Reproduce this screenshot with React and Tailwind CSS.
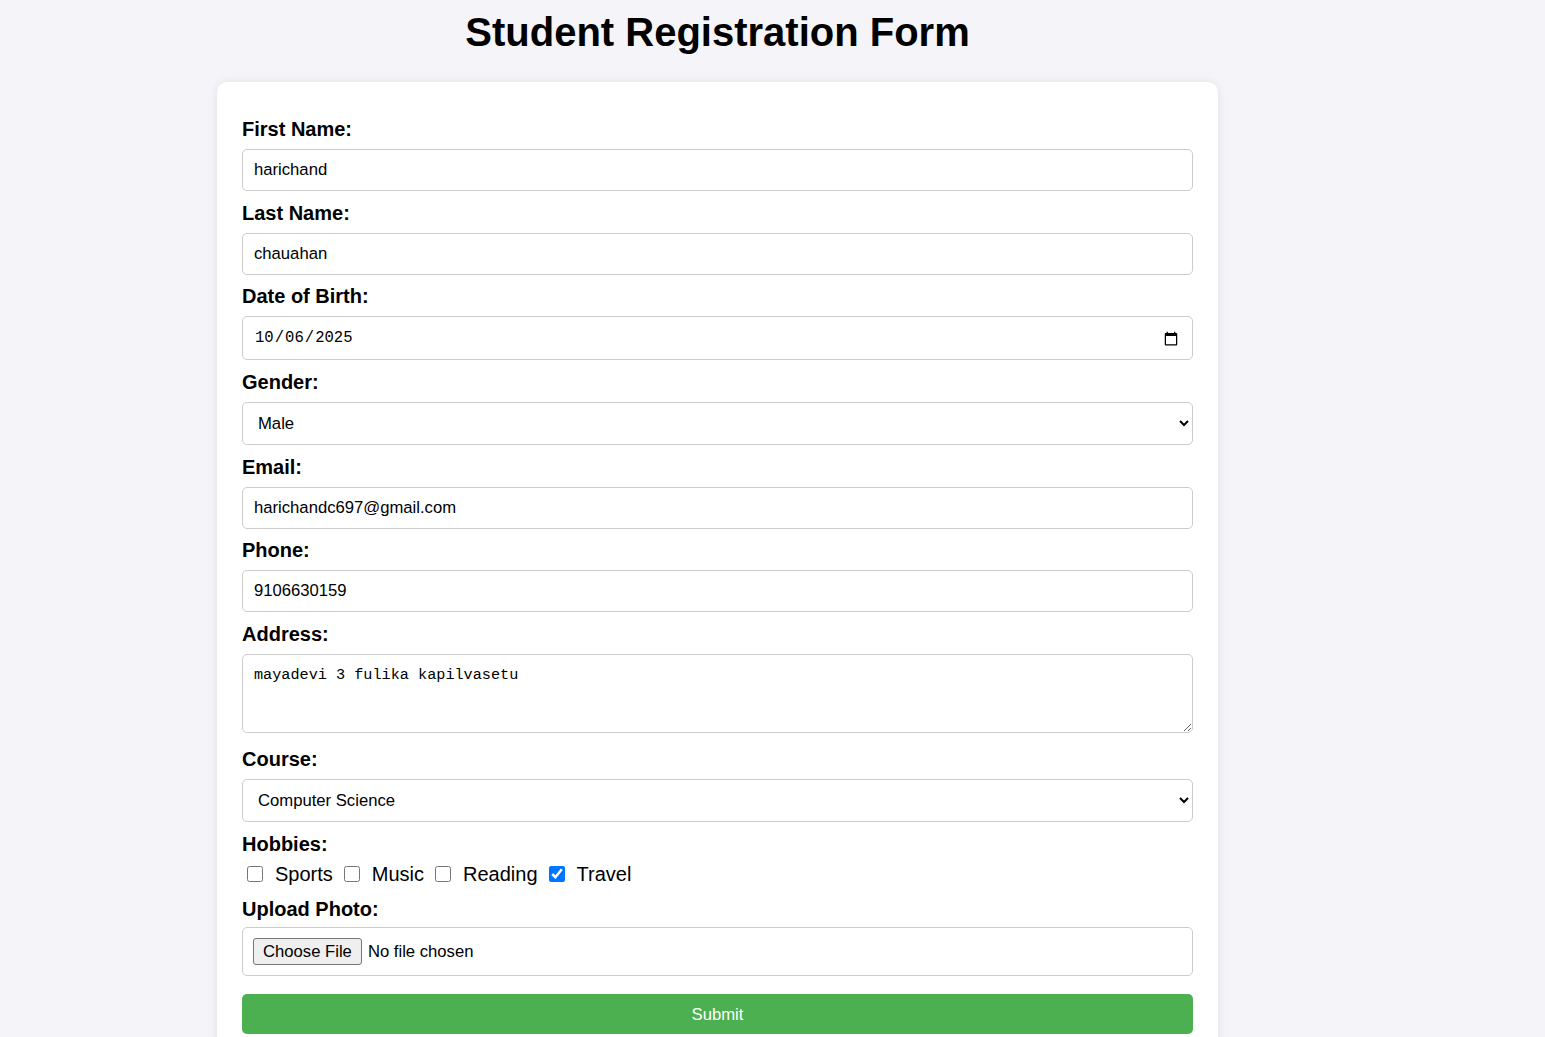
import React from 'react';

const labelCls = 'block text-[20px] leading-[23px] font-bold mb-[8px]';
const inputCls =
  'block w-full h-[42px] border border-[#cccccc] rounded-[5px] px-[11px] text-[16.67px] bg-white text-black mb-[10.7px] outline-none';

const hobbies = [
  { name: 'Sports', checked: false },
  { name: 'Music', checked: false },
  { name: 'Reading', checked: false },
  { name: 'Travel', checked: true },
];

export default function App() {
  return (
    <div className="min-h-[1037px] bg-[#f4f4f9] font-['Liberation_Sans',Arial,sans-serif] text-black">
      <div className="w-[1435px]">
        <h1 className="text-center text-[40px] leading-[46px] font-bold pt-[9px] mb-[27px]">
          Student Registration Form
        </h1>

        <div className="mx-auto w-[1001px] bg-white rounded-[10px] shadow-[0_0_10px_rgba(0,0,0,0.08)] px-[25px] pt-[36px] pb-[30px]">
          <form onSubmit={(e) => e.preventDefault()}>
            <label className={labelCls}>First Name:</label>
            <input className={inputCls} type="text" defaultValue="harichand" />

            <label className={labelCls}>Last Name:</label>
            <input className={inputCls} type="text" defaultValue="chauahan" />

            <label className={labelCls}>Date of Birth:</label>
            <input
              className="block w-full h-[44px] border border-[#cccccc] rounded-[5px] px-[11px] text-[15.6px] font-['Liberation_Mono',monospace] bg-white mb-[10.7px] outline-none"
              type="date"
              defaultValue="2025-10-06"
            />

            <label className={labelCls}>Gender:</label>
            <select
              className="block w-full h-[43px] border border-[#cccccc] rounded-[5px] px-[11px] text-[16.67px] bg-white mb-[10.7px] outline-none"
              defaultValue="Male"
            >
              <option>Male</option>
              <option>Female</option>
              <option>Other</option>
            </select>

            <label className={labelCls}>Email:</label>
            <input className={inputCls} type="email" defaultValue="harichandc697@gmail.com" />

            <label className={labelCls}>Phone:</label>
            <input className={inputCls} type="tel" defaultValue="9106630159" />

            <label className={labelCls}>Address:</label>
            <textarea
              className="block w-full h-[79px] border border-[#cccccc] rounded-[5px] px-[11px] pt-[11px] pb-[10px] text-[15.2px] leading-[19px] font-['Liberation_Mono',monospace] bg-white mb-[15px] outline-none"
              defaultValue="mayadevi 3 fulika kapilvasetu"
            />

            <label className={labelCls}>Course:</label>
            <select
              className="block w-full h-[43px] border border-[#cccccc] rounded-[5px] px-[11px] text-[16.67px] bg-white mb-[11px] outline-none"
              defaultValue="Computer Science"
            >
              <option>Computer Science</option>
              <option>Information Technology</option>
              <option>Business</option>
            </select>

            <label className="block text-[20px] leading-[23px] font-bold mb-[3px]">Hobbies:</label>
            <div className="flex items-center h-[30px] text-[20px] mb-[9px]">
              {hobbies.map((h) => (
                <label key={h.name} className="flex items-center">
                  <input
                    type="checkbox"
                    defaultChecked={h.checked}
                    className="w-[16px] h-[16px] ml-[5px] mr-[12px] accent-[#0075ff]"
                  />
                  <span className="mr-[6px]">{h.name}</span>
                </label>
              ))}
            </div>

            <label className="block text-[20px] leading-[23px] font-bold mb-[6px]">Upload Photo:</label>
            <div className="w-full h-[49px] border border-[#cccccc] rounded-[5px] px-[10px] flex items-center mb-[18px]">
              <input
                type="file"
                className="text-[16.67px] file:h-[27px] file:px-[9px] file:mr-[6px] file:border file:border-[#767676] file:rounded-[3px] file:bg-[#efefef] file:text-black"
              />
            </div>

            <button
              type="submit"
              className="block w-full h-[40px] rounded-[5px] bg-[#4caf50] text-white text-[16.67px]"
            >
              Submit
            </button>
          </form>
        </div>
      </div>
    </div>
  );
}
